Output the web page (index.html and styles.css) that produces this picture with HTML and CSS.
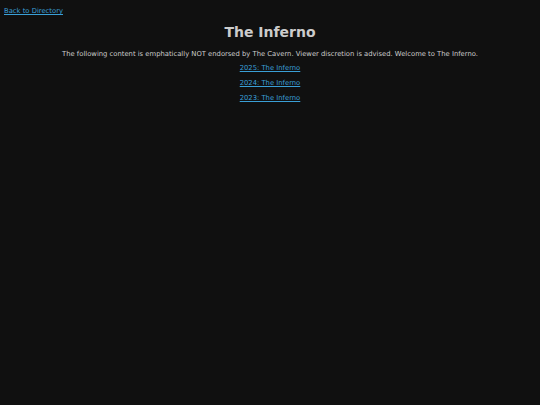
FILE: index.html
```html
<!DOCTYPE html>
<html>
<head>
<meta charset="utf-8">
<link rel="stylesheet" href="styles.css">
</head>
<body>
<a class="back" href="#">Back to Directory</a>
<h1 class="title">The Inferno</h1>
<p class="intro">The following content is emphatically NOT endorsed by The Cavern. Viewer discretion is advised. Welcome to The Inferno.</p>
<ul class="links">
<li><a href="#">2025: The Inferno</a></li>
<li><a href="#">2024: The Inferno</a></li>
<li><a href="#">2023: The Inferno</a></li>
</ul>
</body>
</html>
```
FILE: styles.css
```css
html, body {
  margin: 0;
  background: #101010;
  color: #cccccc;
  font-family: "DejaVu Sans", Verdana, sans-serif;
  font-size: 6.8px;
}
body {
  padding: 7px 4px;
}
a {
  color: #3a9fd6;
}
.back {
  display: inline-block;
}
.title {
  text-align: center;
  font-size: 14px;
  font-weight: bold;
  margin: 8px 0 0;
  line-height: 18px;
}
.intro {
  text-align: center;
  margin: 9px 0 0;
}
.links {
  list-style: none;
  padding: 0;
  margin: -1px 0 0;
  text-align: center;
}
.links li {
  margin-top: 7px;
}
```
